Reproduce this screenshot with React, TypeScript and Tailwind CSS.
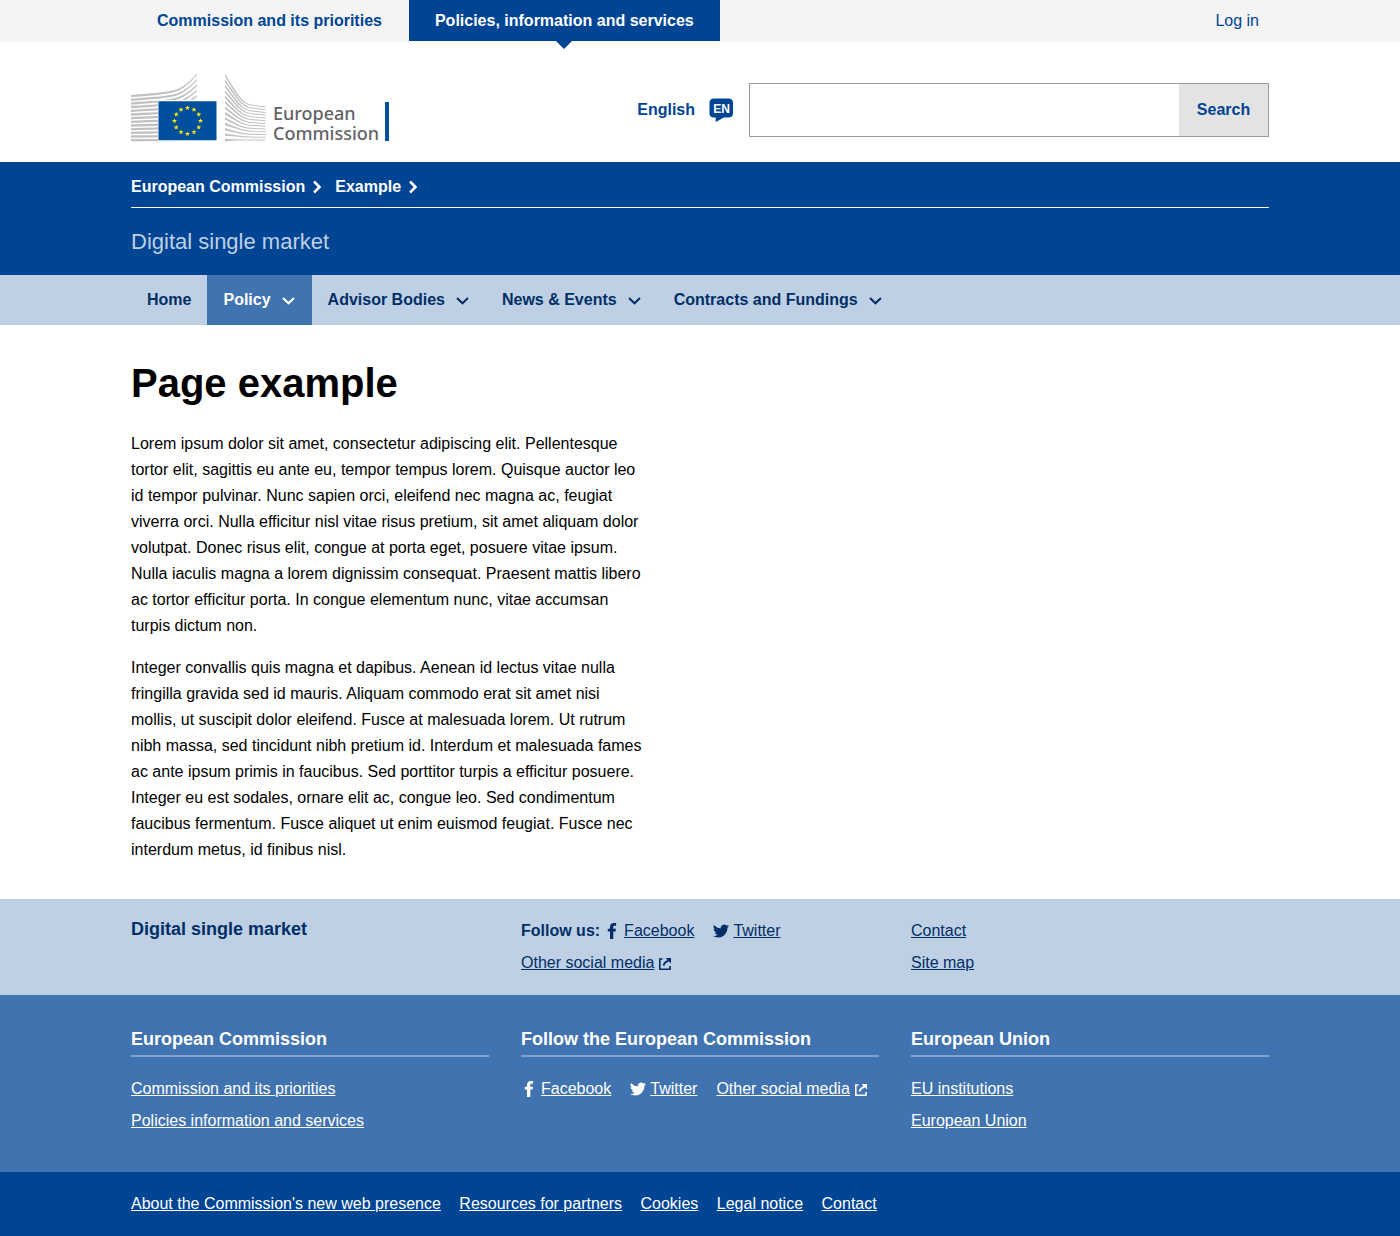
import React from 'react';

const stripes = [0, 1, 2, 3, 4, 5, 6, 7, 8, 9, 10, 11, 12];
const stars = [0, 30, 60, 90, 120, 150, 180, 210, 240, 270, 300, 330];

function Logo() {
  return (
    <span className="flex items-end">
      <svg width="136" height="70" viewBox="0 0 136 70" aria-hidden="true">
        <g fill="#bfc1c3">
          {stripes.map((i) => {
            const y = 23 + i * 3.67;
            const s = 1 - i / 12;
            const end = 1.5 + i * 5.4;
            return (
              <path
                key={i}
                d={`M0 ${y}L24 ${y - 2 * s}C46 ${y - 4 * s} 52 ${y - 6 * s} 66 ${end}V${end + 1.6}C52 ${y - 6 * s + 2} 46 ${y - 4 * s + 2} 24 ${y - 2 * s + 2.2}L0 ${y + 2.3}z`}
              />
            );
          })}
          {stripes.map((i) => {
            const a = 2 + i * 5.4;
            const b = 34.6 + i * 2.75;
            const h = b - a;
            return (
              <path
                key={i}
                d={`M94 ${a}L104 ${a + h * 0.48}Q111 ${a + h * 0.85} 119 ${a + h * 0.93}L134.500 ${b}v.9L119 ${a + h * 0.93 + 1}Q110 ${a + h * 0.85 + 1.2} 103 ${a + h * 0.48 + 1.3}L94 ${a + 2.6}z`}
              />
            );
          })}
        </g>
        <path d="M27 28h59v41H27z" fill="#fff" />
        <path d="M27.500 29.300h58v39h-58z" fill="#004f9f" />
        <g fill="#ffed00">
          {stars.map((angle) => {
            const r = (angle * Math.PI) / 180;
            return (
              <path
                key={angle}
                transform={`translate(${56.5 + 13 * Math.sin(r)} ${48.9 - 13 * Math.cos(r)})`}
                d="M0-2.700.65-.8H2.600L1 .35 1.600 2.200 0 1.050-1.600 2.200-1 .35-2.600-.8h1.950z"
              />
            );
          })}
        </g>
      </svg>
      <span className="-mb-px ml-[6px] block w-[108px] font-['Noto_Sans',sans-serif] text-[18px] leading-5 font-medium text-[#626366]">
        European
        <br />
        Commission
      </span>
      <span className="mb-px ml-1 h-[39px] w-1 bg-[#004f9f]" />
    </span>
  );
}

function Facebook() {
  return (
    <svg className="inline-block shrink-0" width="16" height="16" viewBox="0 0 16 16" fill="currentColor" aria-hidden="true">
      <path d="M6 16V8.500H3.800V5.700H6V4C6 1.400 7.500 0 9.900 0h2.200v2.800h-1.400C9.600 2.800 9.300 3.200 9.300 4v1.700H12l-.4 2.800H9.300V16z" />
    </svg>
  );
}

function Twitter() {
  return (
    <svg className="inline-block shrink-0" width="16" height="16" viewBox="0 2 24 20" fill="currentColor" aria-hidden="true">
      <path d="M23.950 4.570a10 10 0 0 1-2.820.770 4.960 4.960 0 0 0 2.160-2.720c-.95.550-2 .950-3.130 1.180a4.920 4.920 0 0 0-8.380 4.480C7.690 8.090 4.070 6.130 1.640 3.160a4.900 4.900 0 0 0 1.520 6.570 4.900 4.900 0 0 1-2.230-.61v.06a4.920 4.920 0 0 0 3.950 4.830 5 5 0 0 1-2.210.08 4.940 4.940 0 0 0 4.600 3.420A9.870 9.870 0 0 1 0 19.540a14 14 0 0 0 7.550 2.210c9.050 0 14-7.500 14-13.980l-.02-.64a9.900 9.900 0 0 0 2.420-2.560z" />
    </svg>
  );
}

function External() {
  return (
    <svg className="mt-px ml-1 inline-block shrink-0" width="14" height="14" viewBox="0 0 14 14" fill="none" stroke="currentColor" aria-hidden="true">
      <path strokeWidth="1.600" d="M4.500 2H1.800v10.200H12V9" />
      <path strokeWidth="1.800" d="M5.500 8.500C6 6.500 8 4.700 10.500 3.700" />
      <path fill="currentColor" stroke="none" d="M7.500 1H13v5.500z" />
    </svg>
  );
}

function Chevron({ right = false }: { right?: boolean }) {
  return right ? (
    <svg width="11" height="14" viewBox="0 0 11 14" fill="none" stroke="currentColor" strokeWidth="2.500" aria-hidden="true">
      <path d="M2 1.500 7.500 7 2 12.500" />
    </svg>
  ) : (
    <svg className="mt-px" width="15" height="10" viewBox="0 0 15 10" fill="none" stroke="currentColor" strokeWidth="2" aria-hidden="true">
      <path d="M2 2l5.500 5.300L13 2" />
    </svg>
  );
}

const container = 'mx-auto w-full max-w-[1170px] px-4';

const menu = [
  { label: 'Home', sub: false, active: false },
  { label: 'Policy', sub: true, active: true },
  { label: 'Advisor Bodies', sub: true, active: false },
  { label: 'News & Events', sub: true, active: false },
  { label: 'Contracts and Fundings', sub: true, active: false },
];

const legalLinks = [
  "About the Commission's new web presence",
  'Resources for partners',
  'Cookies',
  'Legal notice',
  'Contact',
];

function FooterTitle({ children }: { children: React.ReactNode }) {
  return (
    <h2 className="mb-4 border-b-2 border-[#82a3cf] pb-1 text-lg leading-6 font-bold">{children}</h2>
  );
}

export default function App() {
  return (
    <div className="bg-white font-['Liberation_Sans',Arial,sans-serif] text-base text-black">
      <div className="bg-[#f4f4f4] text-[#004494]">
        <nav aria-label="Sites" className={`${container} flex h-[42px] items-start gap-px`}>
          <a href="#" className="px-[26px] py-2 leading-[25px] font-bold">Commission and its priorities</a>
          <a href="#" aria-current="page" className="relative bg-[#004494] px-[26px] py-2 leading-[25px] font-bold text-white">
            Policies, information and services
            <span className="absolute top-full left-1/2 -ml-2 border-x-8 border-t-8 border-x-transparent border-t-[#004494]" />
          </a>
          <a href="#" className="ml-auto px-[10px] py-2 leading-[25px]">Log in</a>
        </nav>
      </div>

      <header>
        <div className={`${container} flex items-center justify-between pt-[30px] pb-5`}>
          <a href="#" aria-label="European Commission"><Logo /></a>
          <div className="flex items-center pt-[10px] pb-1">
            <a href="#" className="flex items-center gap-[14px] font-bold text-[#004494]">
              English
              <svg width="25" height="24" viewBox="0 0 25 24" aria-hidden="true">
                <path fill="#004494" d="M5 .5h14.500q4.500 0 4.500 4.500v10q0 4.500-4.500 4.500H15L6.700 24v-4.500H5Q.5 19.500.5 15V5Q.5.5 5 .5z" />
                <text x="12.500" y="15" textAnchor="middle" fill="#fff" className="text-[12px] font-bold">EN</text>
              </svg>
            </a>
            <form className="ml-[15px] flex h-[54px] w-[520px] border border-[#9b9b9b]" onSubmit={(e) => e.preventDefault()}>
              <input type="search" aria-label="Search this website" className="min-w-0 grow px-4 outline-none" />
              <button type="submit" className="w-[89px] bg-[#e3e3e3] font-bold text-[#004494]">Search</button>
            </form>
          </div>
        </div>

        <div className="bg-[#004494] text-white">
          <div className={container}>
            <nav aria-label="Breadcrumb" className="flex h-[46px] items-center gap-3 border-b border-white pt-[5px] font-bold">
              <a href="#" className="flex items-center gap-[7px]">European Commission <Chevron right /></a>
              <a href="#" className="flex items-center gap-[7px]">Example <Chevron right /></a>
            </nav>
            <p className="pt-[18px] pb-[17px] text-[22px] leading-8 text-[#bfd0e4]">Digital single market</p>
          </div>
        </div>

        <nav aria-label="Main" className="bg-[#bfd0e4] text-[#002f67]">
          <ul className={`${container} flex`}>
            {menu.map((m) => (
              <li key={m.label}>
                <a
                  href="#"
                  className={`flex h-[50px] items-center gap-[10px] px-4 font-bold ${m.active ? 'bg-[#4073af] text-white' : ''}`}
                >
                  {m.label}
                  {m.sub && <Chevron />}
                </a>
              </li>
            ))}
          </ul>
        </nav>
      </header>

      <main className={`${container} pt-[31px] pb-9`}>
        <h1 className="mb-[21px] text-[40px] leading-[54px] font-bold">Page example</h1>
        <div className="max-w-[514px] space-y-4 leading-[26px]">
          <p>
            Lorem ipsum dolor sit amet, consectetur adipiscing elit. Pellentesque tortor elit, sagittis eu ante eu,
            tempor tempus lorem. Quisque auctor leo id tempor pulvinar. Nunc sapien orci, eleifend nec magna ac, feugiat
            viverra orci. Nulla efficitur nisl vitae risus pretium, sit amet aliquam dolor volutpat. Donec risus elit,
            congue at porta eget, posuere vitae ipsum. Nulla iaculis magna a lorem dignissim consequat. Praesent mattis
            libero ac tortor efficitur porta. In congue elementum nunc, vitae accumsan turpis dictum non.
          </p>
          <p>
            Integer convallis quis magna et dapibus. Aenean id lectus vitae nulla fringilla gravida sed id mauris.
            Aliquam commodo erat sit amet nisi mollis, ut suscipit dolor eleifend. Fusce at malesuada lorem. Ut rutrum
            nibh massa, sed tincidunt nibh pretium id. Interdum et malesuada fames ac ante ipsum primis in faucibus. Sed
            porttitor turpis a efficitur posuere. Integer eu est sodales, ornare elit ac, congue leo. Sed condimentum
            faucibus fermentum. Fusce aliquet ut enim euismod feugiat. Fusce nec interdum metus, id finibus nisl.
          </p>
        </div>
      </main>

      <footer>
        <div className="bg-[#bfd0e4] text-[#002f67]">
          <div className={`${container} grid grid-cols-3 gap-8 py-4 leading-8`}>
            <h2 className="text-lg leading-7 font-bold">Digital single market</h2>
            <div>
              <div className="flex items-center">
                <strong>Follow us:</strong>
                <span className="mr-[19px] ml-1 flex items-center gap-1"><Facebook /><a href="#" className="underline">Facebook</a></span>
                <span className="flex items-center gap-1"><Twitter /><a href="#" className="underline">Twitter</a></span>
              </div>
              <div className="flex items-center"><a href="#" className="underline">Other social media</a><External /></div>
            </div>
            <ul>
              <li><a href="#" className="underline">Contact</a></li>
              <li><a href="#" className="underline">Site map</a></li>
            </ul>
          </div>
        </div>

        <div className="bg-[#4073af] text-white">
          <div className={`${container} grid grid-cols-3 gap-8 pt-8 pb-[35px] leading-8`}>
            <section>
              <FooterTitle>European Commission</FooterTitle>
              <ul>
                <li><a href="#" className="underline">Commission and its priorities</a></li>
                <li><a href="#" className="underline">Policies information and services</a></li>
              </ul>
            </section>
            <section>
              <FooterTitle>Follow the European Commission</FooterTitle>
              <div className="flex items-center gap-[19px]">
                <span className="flex items-center gap-1"><Facebook /><a href="#" className="underline">Facebook</a></span>
                <span className="flex items-center gap-1"><Twitter /><a href="#" className="underline">Twitter</a></span>
                <span className="flex items-center"><a href="#" className="underline">Other social media</a><External /></span>
              </div>
            </section>
            <section>
              <FooterTitle>European Union</FooterTitle>
              <ul>
                <li><a href="#" className="underline">EU institutions</a></li>
                <li><a href="#" className="underline">European Union</a></li>
              </ul>
            </section>
          </div>
        </div>

        <div className="bg-[#004494] text-white">
          <nav aria-label="Legal" className={`${container} py-4 leading-8`}>
            {legalLinks.map((label) => (
              <React.Fragment key={label}>
                <a href="#" className="mr-[14px] underline">{label}</a>{' '}
              </React.Fragment>
            ))}
          </nav>
        </div>
      </footer>
    </div>
  );
}
